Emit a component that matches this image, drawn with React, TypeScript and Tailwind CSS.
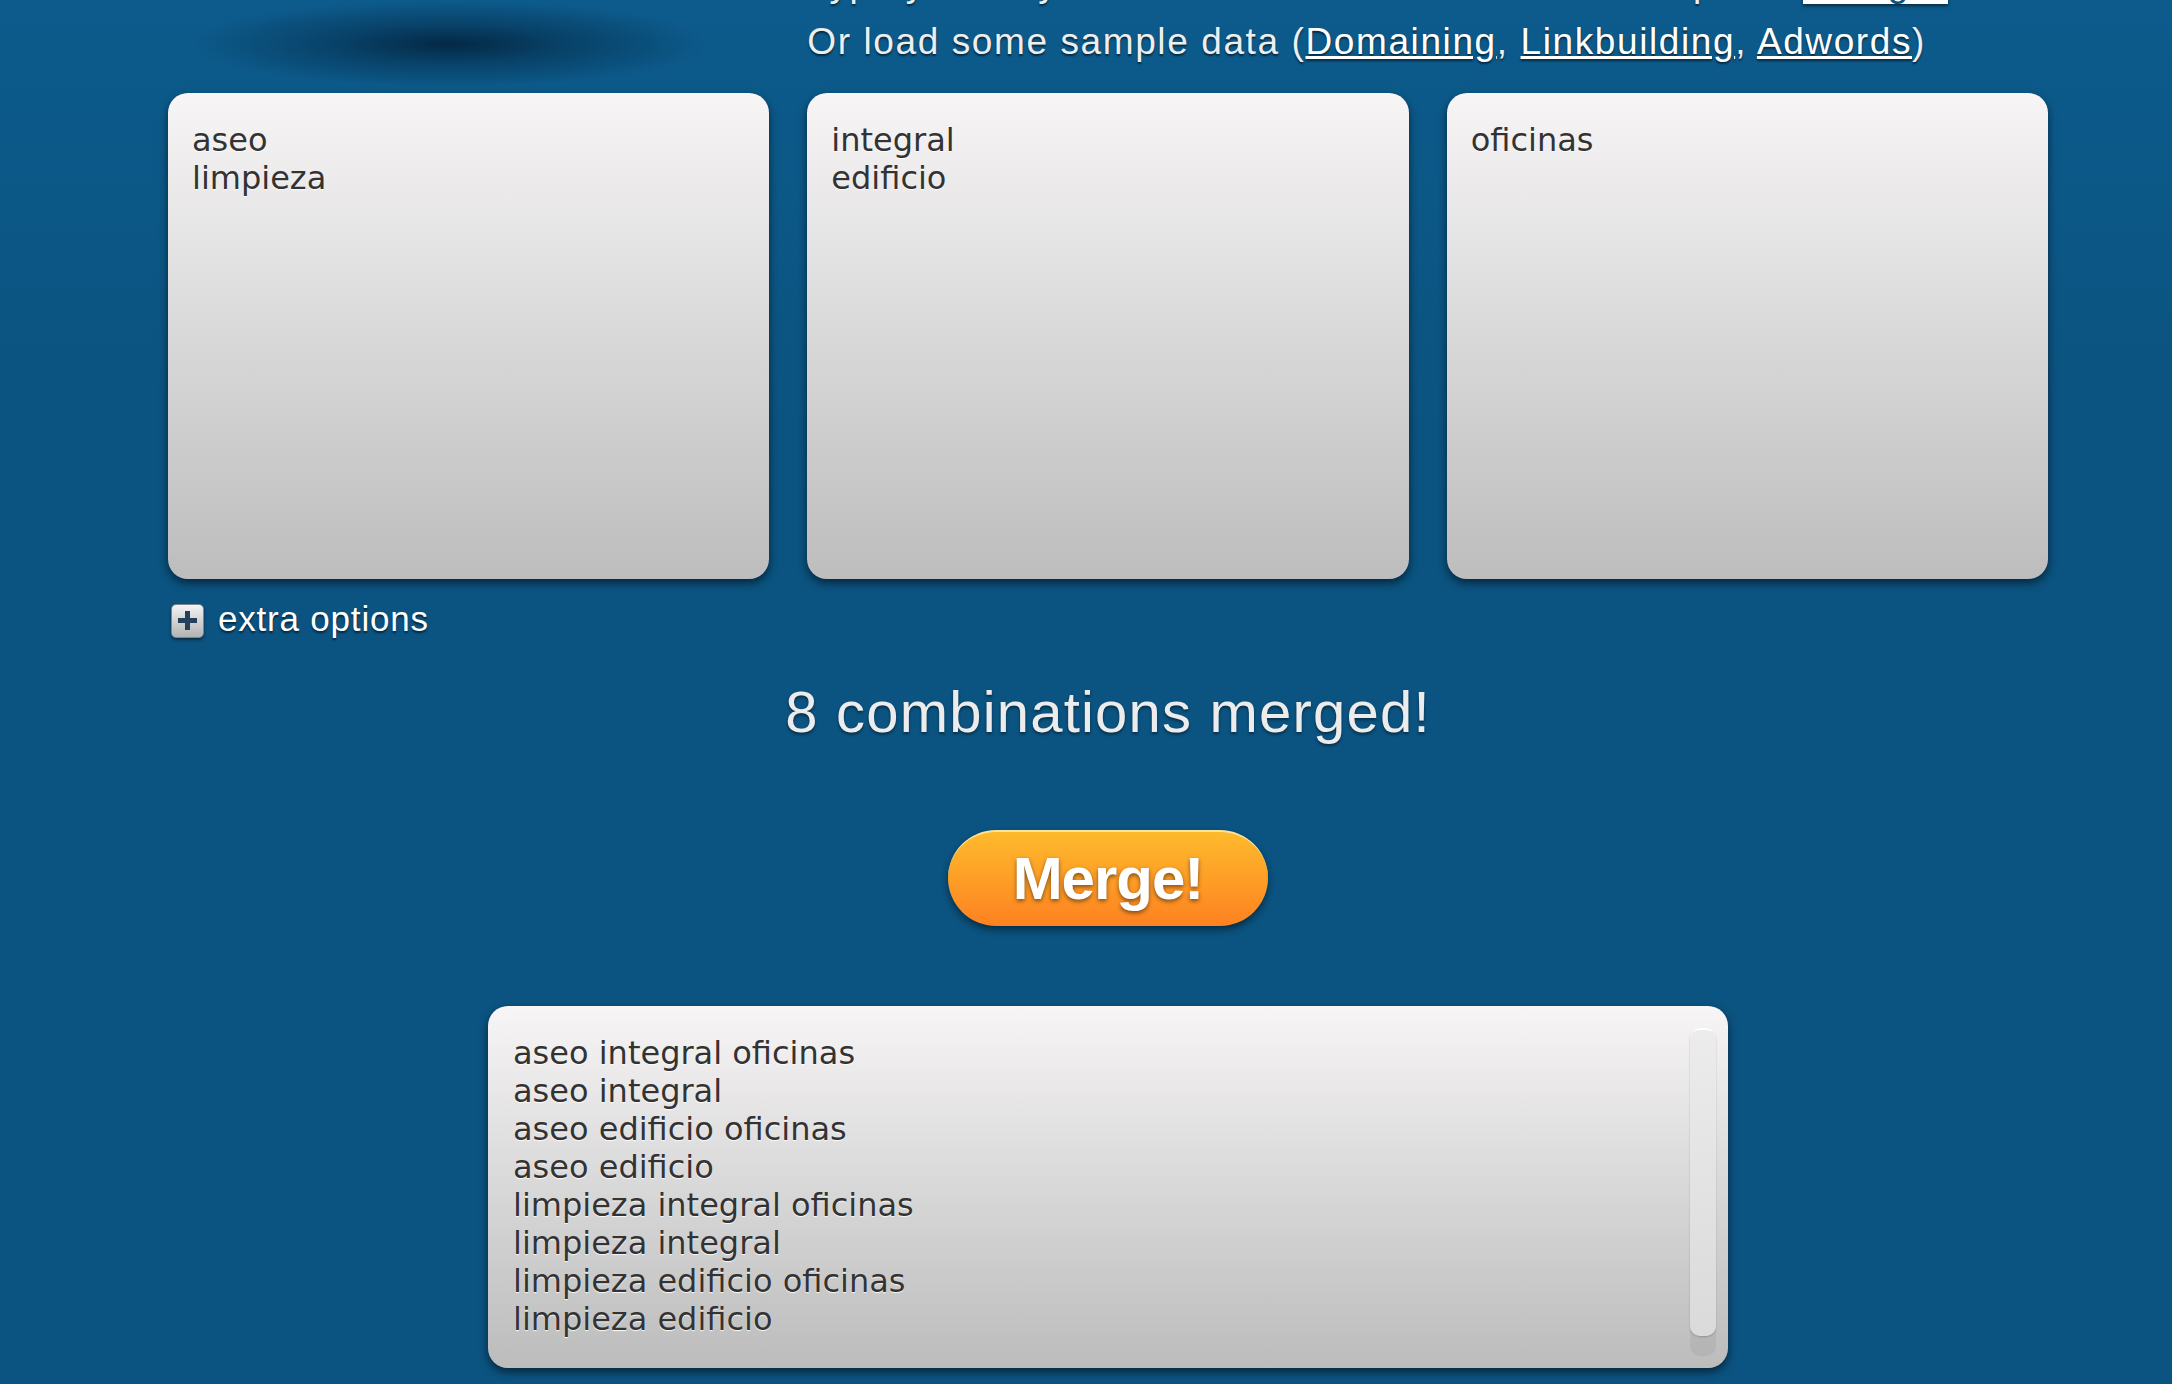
import React from "react";

const inputs = [
  ["aseo", "limpieza"],
  ["integral", "edificio"],
  ["oficinas"],
];

const results = [
  "aseo integral oficinas",
  "aseo integral",
  "aseo edificio oficinas",
  "aseo edificio",
  "limpieza integral oficinas",
  "limpieza integral",
  "limpieza edificio oficinas",
  "limpieza edificio",
];

const sans = "font-['Liberation_Sans',Arial,sans-serif]";
const boxText =
  "font-['DejaVu_Sans',Verdana,sans-serif] text-[32px] leading-[38px] text-[#333] [text-shadow:0_1px_1px_rgba(255,255,255,0.9)]";

function PlusIcon() {
  return (
    <div className="w-[33px] h-[34px] rounded-[5px] border border-[#7d8790] bg-gradient-to-b from-[#f4f4f4] to-[#b3b3b3] shadow-[0_2px_3px_rgba(0,0,0,0.45)] flex items-center justify-center">
      <svg width="21" height="21" viewBox="0 0 21 21">
        <rect x="8" y="1" width="5" height="19" fill="#24405a" />
        <rect x="1" y="8" width="19" height="5" fill="#24405a" />
      </svg>
    </div>
  );
}

export default function App() {
  return (
    <div className="w-full min-h-[1384px] overflow-hidden bg-[linear-gradient(to_bottom,#0c5b8c,#0b5380_420px)]">
      <div className={`ml-[168px] w-[1880px] ${sans}`}>
        {/* header: logo shadow + instructions */}
        <div className="-mt-[45px] grid grid-cols-3 items-start gap-x-[38px]">
          <div>
            <div className="mt-[44px] -mb-[30px] ml-[12px] h-[90px] w-[540px] bg-[radial-gradient(ellipse_at_center,rgba(0,20,40,0.7)_0%,rgba(0,20,40,0.35)_30%,rgba(0,20,40,0)_68%)]" />
          </div>
          <div className="col-span-2 text-[37px] leading-[58px] tracking-[1.6px] text-[#eeeeee] [text-shadow:0_2px_2px_rgba(0,0,0,0.55)] whitespace-nowrap">
            <p>
              Type your keywords in the boxes below and then press{" "}
              <span className="bg-white px-[16px] text-[#0b5380] [text-shadow:none] shadow-[0_2px_3px_rgba(0,0,0,0.5)]">
                Merge
              </span>
            </p>
            <p>
              Or load some sample data (
              <a className="underline text-white">Domaining</a>,{" "}
              <a className="underline text-white">Linkbuilding</a>,{" "}
              <a className="underline text-white">Adwords</a>)
            </p>
          </div>
        </div>

        {/* keyword columns */}
        <div className="mt-[22px] grid grid-cols-3 gap-x-[38px]">
          {inputs.map((col, i) => (
            <div
              key={i}
              className={`h-[486px] rounded-[20px] bg-gradient-to-b from-[#f7f5f6] to-[#bdbdbd] shadow-[0_4px_8px_rgba(0,0,0,0.55)] pt-[28px] pl-[24px] ${boxText}`}
            >
              {col.map((w) => (
                <div key={w}>{w}</div>
              ))}
            </div>
          ))}
        </div>

        <div className="mt-[23px] ml-[3px] flex items-center gap-[14px]">
          <PlusIcon />
          <span className="text-[35px] leading-[40px] tracking-[0.8px] text-white [text-shadow:0_2px_2px_rgba(0,0,0,0.55)] -mt-[3px]">
            extra options
          </span>
        </div>

        <h2 className="mt-[40px] text-center text-[58px] leading-[66px] tracking-[1.2px] text-[#ececec] [text-shadow:0_2px_3px_rgba(0,0,0,0.45)]">
          8 combinations merged!
        </h2>

        <button className="mx-auto mt-[85px] flex h-[96px] w-[320px] items-center justify-center rounded-full border-t-2 border-[#ffe39a] bg-gradient-to-b from-[#fdba2c] to-[#fd8121] shadow-[0_4px_7px_rgba(0,0,0,0.45)] text-[60px] font-bold tracking-[-1px] text-white [text-shadow:0_2px_4px_rgba(0,0,0,0.5)]">
          Merge!
        </button>

        <div className="mx-auto mt-[80px] flex h-[362px] w-[1240px] rounded-[20px] bg-gradient-to-b from-[#f7f5f6] to-[#bcbcbc] shadow-[0_4px_8px_rgba(0,0,0,0.55)]">
          <div className={`flex-1 pt-[28px] pl-[25px] ${boxText}`}>
            {results.map((r) => (
              <div key={r}>{r}</div>
            ))}
          </div>
          <div className="mt-[22px] mb-[12px] mr-[12px] w-[26px] rounded-[10px] bg-black/5 flex flex-col">
            <div className="h-[308px] rounded-[10px] border-t-2 border-white bg-gradient-to-b from-[#ececec] to-[#dadada] shadow-[0_1px_2px_rgba(0,0,0,0.2)]" />
          </div>
        </div>
      </div>
    </div>
  );
}
